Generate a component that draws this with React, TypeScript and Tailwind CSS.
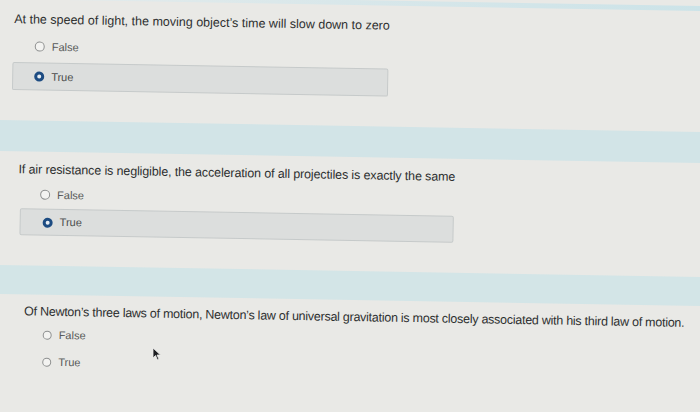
import React from 'react';

// The reference is a photo of a screen, tilted by about one degree,
// so the page is laid out flat and the sheet is turned as a whole.

type Question = {
  text: string;
  answer: 'False' | 'True' | null;
  wrap: string; // padding around the block
  textCls: string;
  listCls: string;
  rowPad: string;
  boxCls: string;
  radio: string;
};

const questions: Question[] = [
  {
    text: "At the speed of light, the moving object\u2019s time will slow down to zero",
    answer: 'True',
    wrap: 'pl-[11px] pt-[12px] pb-[30px]',
    textCls: 'tracking-[0px]',
    listCls: 'mt-[10px] gap-[7px]',
    rowPad: 'pl-[21px]',
    boxCls: 'w-[376px] h-[28px] -ml-[1px]',
    radio: 'h-[10px] w-[10px]',
  },
  {
    text: 'If air resistance is negligible, the acceleration of all projectiles is exactly the same',
    answer: 'True',
    wrap: 'pl-[18px] pt-[10px] pb-[30px]',
    textCls: 'tracking-[-0.13px]',
    listCls: 'mt-[8px] gap-[5px]',
    rowPad: 'pl-[22px]',
    boxCls: 'w-[434px] h-[27px] ml-[2px]',
    radio: 'h-[10px] w-[10px]',
  },
  {
    text: 'Of Newton\u2019s three laws of motion, Newton\u2019s law of universal gravitation is most closely associated with his third law of motion.',
    answer: null,
    wrap: 'pl-[26px] pt-[9px] pb-[40px]',
    textCls: 'tracking-[-0.26px]',
    listCls: 'mt-[6px] gap-[9px]',
    rowPad: 'pl-[19px]',
    boxCls: '',
    radio: 'h-[9px] w-[9px]',
  },
];

function Radio({ checked, size }: { checked: boolean; size: string }) {
  if (checked) {
    return (
      <span className={`${size} flex shrink-0 items-center justify-center rounded-full bg-[#1d4c82]`}>
        <span className="h-[4px] w-[4px] rounded-full bg-[#e6edf3]" />
      </span>
    );
  }
  return <span className={`${size} shrink-0 rounded-full border border-[#8d8f8f] bg-[#f3f3f1]`} />;
}

function Option({ label, q }: { label: 'False' | 'True'; q: Question }) {
  const checked = q.answer === label;
  if (checked) {
    return (
      <div
        className={`${q.boxCls} ${q.rowPad} flex items-center gap-[7px] rounded-[2px] border border-[#c6caca] bg-[#dcdedd]`}
      >
        <Radio checked size={q.radio} />
        <span className="text-[11px] text-[#4a4c4c]">{label}</span>
      </div>
    );
  }
  return (
    <div className={`${q.rowPad} flex h-[18px] items-center gap-[7px]`}>
      <Radio checked={false} size={q.radio} />
      <span className="text-[11px] text-[#575959]">{label}</span>
    </div>
  );
}

function QuestionBlock({ q }: { q: Question }) {
  return (
    <div className={q.wrap}>
      <p className={`text-[12.5px] leading-[16px] whitespace-nowrap text-[#2e3030] ${q.textCls}`}>{q.text}</p>
      <div className={`flex flex-col ${q.listCls}`}>
        <Option label="False" q={q} />
        <Option label="True" q={q} />
      </div>
    </div>
  );
}

export default function App() {
  return (
    <div
      className="relative h-[412px] w-[700px] overflow-hidden bg-[#e9e9e6]"
      style={{ fontFamily: '"Liberation Sans", Arial, sans-serif' }}
    >
      <div className="-ml-[20px] h-[412px] w-[740px] rotate-[1deg] pl-[20px]">
        <div className="-ml-[20px] h-[5px] w-[740px] bg-gradient-to-r from-[#e6ecec] via-[#d8e7ea] to-[#cbe3e8]" />
        {questions.map((q, i) => (
          <React.Fragment key={i}>
            {i === 1 && <div className="-ml-[20px] h-[31px] w-[740px] bg-[#d2e4e7]" />}
            {i === 2 && <div className="-ml-[20px] h-[29px] w-[740px] bg-[#d3e5e7]" />}
            <QuestionBlock q={q} />
          </React.Fragment>
        ))}
      </div>
      <svg className="absolute left-[152px] top-[347px]" width="10" height="14" viewBox="0 0 10 14">
        <path d="M1 1 L1 11 L3.5 8.5 L5.5 13 L7 12.3 L5 8 L8.5 8 Z" fill="#1e1f22" stroke="#eeeeec" strokeWidth="0.8" />
      </svg>
    </div>
  );
}
